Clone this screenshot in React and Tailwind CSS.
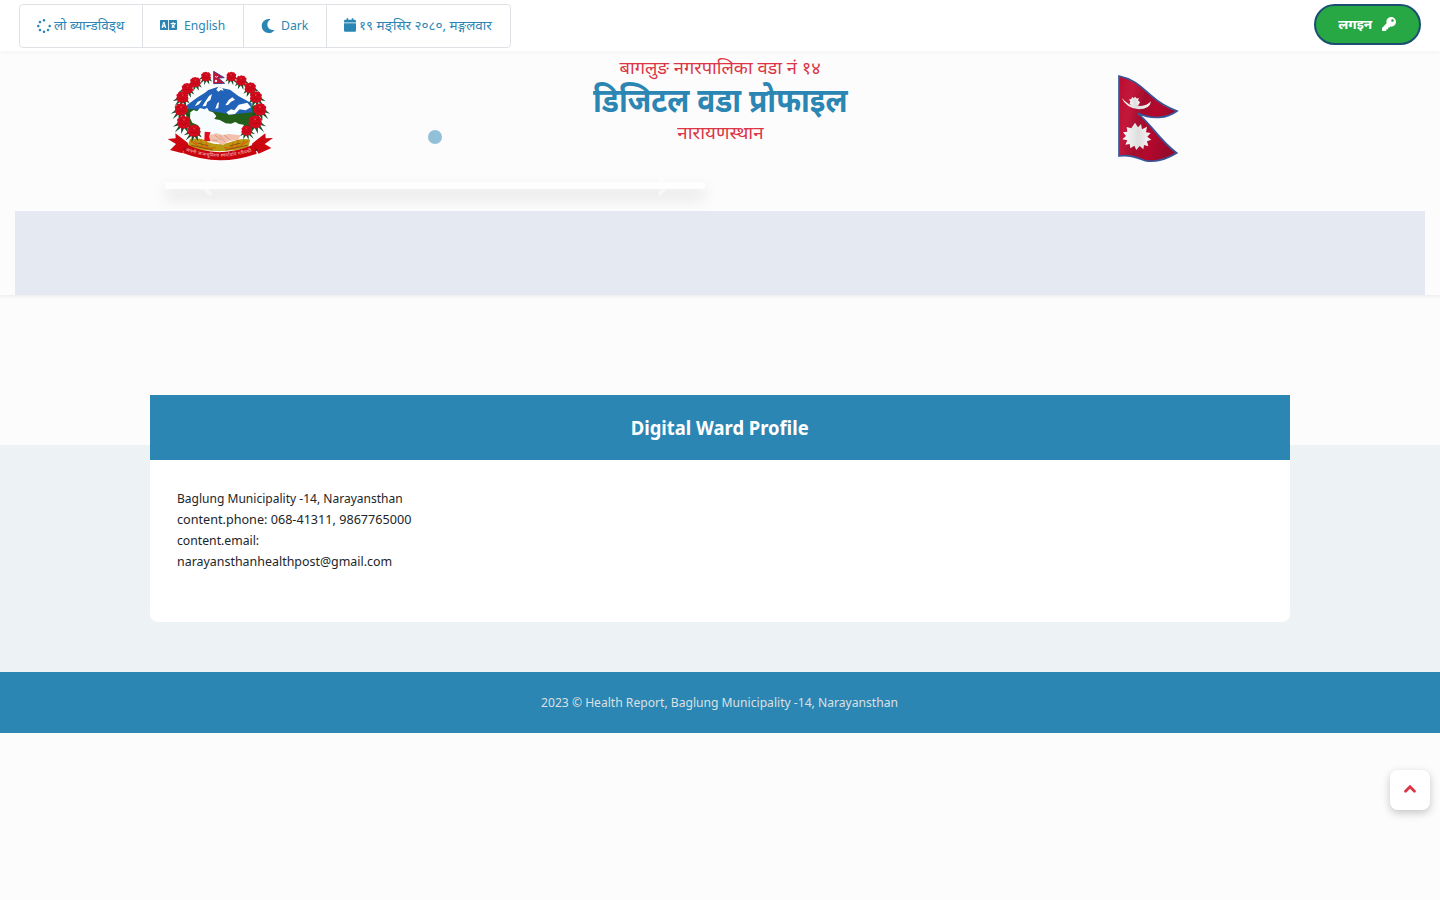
import React from "react";
import { FaLanguage, FaMoon, FaCalendar, FaKey, FaSpinner } from "react-icons/fa";

const flowers = [
  [153, 50, 14], [121, 67, 15], [97, 86, 16], [82, 112, 17], [78, 149, 18], [86, 187, 19], [117, 213, 18],
  [229, 50, 14], [259, 62, 15], [286, 84, 16], [303, 112, 17], [315, 149, 18], [301, 186, 19], [275, 212, 15],
];

function Flower({ x, y, r }) {
  const side = x < 190 ? 1 : -1;
  return (
    <g transform={`translate(${x} ${y}) scale(${(side * r) / 20} ${r / 20})`}>
      <path fill="#17502a" d="M-12-4-34 14-14 9-28 32-8 16-8 37 2 18 14 34 12 14 26 22 16 4Z" />
      <path
        fill="#d20a1c"
        d="M-6-19Q0-24 6-18 14-22 17-13 24-10 19-2 25 6 17 11 15 20 6 17 0 23-7 17-16 20-17 11-24 6-19-2-24-11-16-13-14-21-6-19Z"
      />
      <path fill="none" stroke="#9b0818" strokeWidth="2" d="M-12-6Q-4-12 0-3 6-12 13-6M-14 5Q-6 0-1 7 6 0 13 6" />
      <circle cx="1" cy="-8" r="3" fill="#ef3b49" />
    </g>
  );
}

function Emblem() {
  return (
    <svg viewBox="0 0 390 330" className="block h-[110px] w-[130px]" aria-hidden="true">
      <path fill="#215f1a" d="M88 150Q120 130 160 145L230 160 300 135 306 190 275 222 110 215Z" />
      <path fill="#2163b8" d="M92 138 128 112 150 98 160 90 190 80 202 85 225 89 250 108 290 130 292 157 225 164 200 158 150 150 94 146Z" />
      <path
        fill="#fcfeff"
        d="M190 80 202 85 206 92 197 90 190 95 184 89ZM162 108 171 102 166 120 157 126 153 138 142 139 150 126ZM221 120 232 112 240 119 228 125 219 135 211 136ZM214 157 228 148 238 151 251 134 277 128 288 142 272 151 254 148 240 162 221 164ZM186 131 192 125 190 144 181 147ZM128 125 141 120 132 133 119 139Z"
      />
      <path
        fill="#f7fdff"
        d="M106 157 116 150 126 154 135 144 149 148 156 143 162 153 174 157 184 168 178 177 194 180 212 190 228 191 241 186 252 192 266 194 268 222 230 227 201 220 184 226 162 220 142 224 135 211 129 196 112 188 105 174Z"
      />
      <path fill="#b99b12" d="M105 237Q145 232 160 247 193 259 224 247 260 232 286 239L279 264Q190 284 97 262Z" />
      <path fill="#f2c1ae" d="M162 226 184 220 202 225 222 222 257 226 250 239 220 244 204 256 190 249 173 245 160 242Z" />
      <path fill="none" stroke="#c68673" strokeWidth="2" d="M180 226 198 239M194 226 210 246M207 225 224 239M171 240 188 242" />
      <path fill="#e30b1b" d="M149 215 167 217 162 229 166 244 148 242Z" />
      <g fill="none" stroke="#d8630b" strokeWidth="4">
        <path d="M107 242Q143 270 182 263M279 242Q243 270 207 263M120 242 127 257M137 240 142 262M154 247 156 264M267 242 259 257M250 240 244 262M234 247 230 264" />
        <path strokeWidth="3" stroke="#8d5610" d="M109 256 174 270M278 256 211 270M128 249 161 258M257 249 224 258" />
      </g>
      {flowers.map(([x, y, r]) => (
        <Flower key={`${x}-${y}`} x={x} y={y} r={r} />
      ))}
      <path d="M176 34 208 53 190 54 209 70 176 71Z" fill="#c91334" stroke="#28358d" strokeWidth="2.5" />
      <circle cx="183" cy="63" r="3.5" fill="#fff" />
      <path d="M180 49Q184 54 189 49" fill="none" stroke="#fff" strokeWidth="2.5" />
      <path fill="#cc0710" d="M38 237 62 235 61 220 99 249 82 280 45 270 63 252ZM354 234 332 235 331 220 291 251 311 281 349 264 329 252Z" />
      <path fill="#790812" d="M99 249 84 271 99 274ZM291 251 309 271 294 276Z" />
      <path fill="#c9040c" d="M94 253Q191 300 298 253L305 281Q191 321 84 279Z" />
      <path id="motto" fill="none" d="M92 272Q191 310 302 271" />
      <text fill="#f6c9c9" fontSize="14" fontFamily="'Noto Sans', sans-serif">
        <textPath href="#motto" textLength="202">जननी जन्मभूमिश्च स्वर्गादपि गरीयसी</textPath>
      </text>
    </svg>
  );
}

function Flag() {
  return (
    <svg viewBox="0 0 300 315" className="block h-[105px] w-[100px]" aria-hidden="true">
      <defs>
        <linearGradient id="cloth" x1="0" x2="1" y1="0" y2=".3">
          <stop offset="0" stopColor="#b80b30" />
          <stop offset=".25" stopColor="#c4183b" />
          <stop offset=".48" stopColor="#a30d2e" />
          <stop offset=".7" stopColor="#b5082d" />
          <stop offset="1" stopColor="#980a2a" />
        </linearGradient>
        <linearGradient id="silver">
          <stop offset="0" stopColor="#fafafa" />
          <stop offset=".55" stopColor="#dedede" />
          <stop offset="1" stopColor="#f6f6f6" />
        </linearGradient>
      </defs>
      <path
        d="M57 33C103 42 125 67 154 92 184 119 206 129 231 138 202 160 156 165 113 145 151 174 175 222 230 264 196 285 165 294 133 286 105 276 87 269 57 273Z"
        fill="url(#cloth)"
        stroke="#375699"
        strokeWidth="5"
      />
      <path fill="url(#silver)" d="M65 98Q88 125 108 121 135 128 153 109 150 133 116 133 77 128 65 98Z" />
      <path fill="url(#silver)" d="M89 116 91 108 86 104 94 102 96 96 101 99 106 95 109 100 117 100 114 106 120 112 115 121Q100 128 89 116Z" />
      <path
        fill="url(#silver)"
        d="M105 173 114 187 123 177 126 193 141 185 138 202 152 204 142 215 154 224 141 229 145 244 132 240 130 253 119 243 109 255 103 242 91 250 89 237 76 239 82 226 67 223 78 213 69 202 82 200 80 186 94 190Z"
      />
    </svg>
  );
}

function Arrow({ points, className }) {
  return (
    <svg viewBox="0 0 20 20" className={className} fill="none" stroke="currentColor" aria-hidden="true">
      <polyline points={points} />
    </svg>
  );
}

const segment = "flex h-full shrink-0 items-center whitespace-nowrap border-r border-[#dee2e6] pl-[17px] last:border-r-0";

export default function App() {
  return (
    <div className="min-h-screen bg-[#fcfcfc] font-['Noto_Sans',sans-serif] text-[13px] text-[#212529]">
      <div className="flex h-[51px] items-start justify-between bg-white pt-1 pl-[19px] pr-[19px] shadow-[0_2px_4px_rgba(0,0,0,0.03)]">
        <div className="flex h-11 w-[492px] rounded-[4px] border border-[#dee2e6] text-[#2b86b4]">
          <button className={`${segment} w-[123px]`}>
            <FaSpinner className="mr-[3px] size-[14px] shrink-0" />
            <span className="origin-left scale-x-[1.03]">लो ब्यान्डविड्थ</span>
          </button>
          <button className={`${segment} w-[101px]`}>
            <FaLanguage className="mr-[7px] mb-[2px] h-[16px] w-[17px] shrink-0" preserveAspectRatio="none" />
            <span className="origin-left scale-x-[.93]">English</span>
          </button>
          <button className={`${segment} w-[83px]`}>
            <FaMoon className="mr-[6px] size-[14px] shrink-0" />
            <span className="origin-left scale-x-[.94]">Dark</span>
          </button>
          <button className={`${segment} w-[183px]`}>
            <FaCalendar className="mr-[3px] mb-[2px] h-[14px] w-[12px] shrink-0" />
            <span className="origin-left scale-x-[1.033]">१९ मङ्सिर २०८०, मङ्गलवार</span>
          </button>
        </div>
        <button className="flex h-[41px] w-[107px] items-center justify-center gap-[9px] rounded-full border-2 border-[#1b4f72] bg-[#28a745] font-bold text-white">
          <span className="scale-x-[1.05]">लगइन</span>
          <FaKey className="mb-[2px] ml-px size-[14px]" />
        </button>
      </div>

      <header className="relative h-[244px] px-[15px] shadow-[0_2px_3px_rgba(0,0,0,0.06)]">
        <div className="grid h-[160px] grid-cols-[565px_280px_565px]">
          <div className="relative pt-[9px] pl-[140px]">
            <Emblem />
            <span className="absolute top-[79px] left-[413px] size-[14px] rounded-full bg-[#93c0d9]" />
            <div className="absolute top-[131px] left-[150px] flex h-[7px] w-[540px] items-center justify-between bg-[#fefefe] px-[32px] text-white shadow-[0_8px_16px_rgba(0,0,0,0.15)]">
              <Arrow points="14,1 6,10 14,19" className="size-[20px] shrink-0 stroke-[3.5] opacity-50" />
              <Arrow points="6,1 14,10 6,19" className="size-[20px] shrink-0 stroke-[3.5] opacity-50" />
            </div>
          </div>
          <div className="flex flex-col items-center whitespace-nowrap text-[#dc3545]">
            <p className="h-[32px] scale-x-[1.015] text-[18px] leading-[32px]">बागलुङ नगरपालिका वडा नं १४</p>
            <h1 className="h-[34px] scale-x-[.907] text-[33px] leading-[34px] font-bold text-[#2b86b4]">डिजिटल वडा प्रोफाइल</h1>
            <p className="scale-x-[1.04] text-[18px] leading-[30px]">नारायणस्थान</p>
          </div>
          <div className="pt-[14px] pl-[240px]">
            <Flag />
          </div>
        </div>
        <nav className="h-[84px] bg-[#e5e9f2]" />
      </header>

      <main className="flex h-[377px] flex-col items-center bg-linear-to-b from-[#fcfcfc] from-[150px] to-[#edf2f5] to-[150px] pt-[100px]">
        <section className="h-[227px] w-[1140px] overflow-hidden rounded-b-[8px] bg-white">
          <h2 className="flex h-[65px] items-center justify-center bg-[#2b86b4] text-[20px] font-bold text-white">
            <span className="scale-x-[.92]">Digital Ward Profile</span>
          </h2>
          <address className="flex flex-col items-start pt-[28px] pl-[27px] leading-[21px] whitespace-nowrap not-italic">
            <span className="origin-left scale-x-[.926]">Baglung Municipality -14, Narayansthan</span>
            <span className="origin-left scale-x-[.971]">content.phone: 068-41311, 9867765000</span>
            <span className="origin-left scale-x-[.94]">content.email:</span>
            <span className="origin-left scale-x-[.956]">narayansthanhealthpost@gmail.com</span>
          </address>
        </section>
      </main>

      <footer className="flex h-[61px] items-center justify-center bg-[#2b86b4] text-[#dce0e3]">
        <span className="scale-x-[.932]">2023 © Health Report, Baglung Municipality -14, Narayansthan</span>
      </footer>

      <button className="fixed right-[10px] bottom-[90px] flex size-10 items-center justify-center rounded-[8px] bg-white pb-[2px] text-[#dc3545] shadow-[0_3px_8px_rgba(0,0,0,0.22)]">
        <Arrow points="5.5,12.3 10,7.8 14.5,12.3" className="size-[20px] stroke-[2.8] [stroke-linecap:round]" />
      </button>
    </div>
  );
}
